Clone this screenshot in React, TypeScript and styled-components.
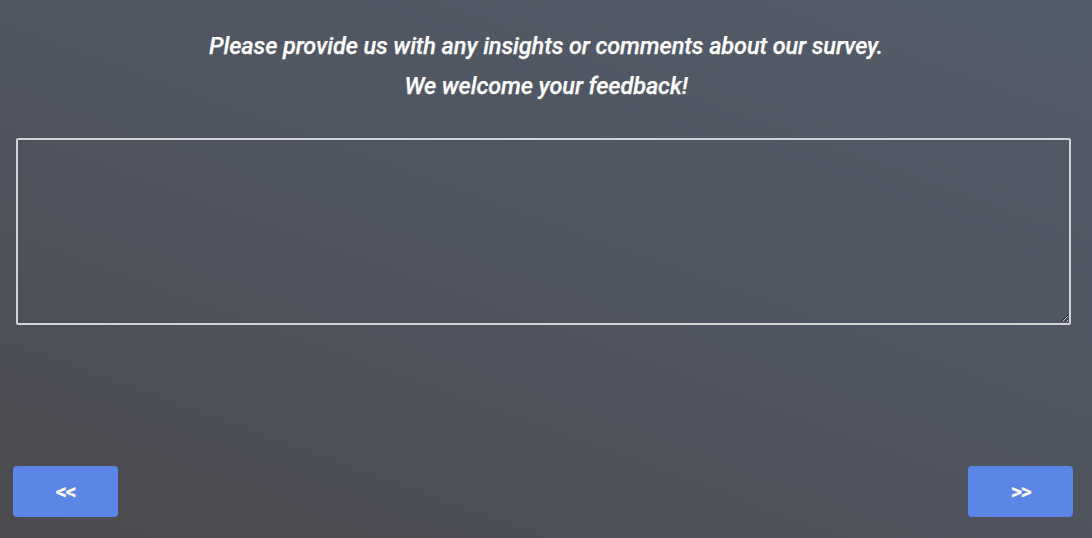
import React from "react";
import styled, { createGlobalStyle } from "styled-components";

const Global = createGlobalStyle`
  html, body { margin: 0; padding: 0; height: 100%; }
  body { background: #4e5360; }
  #root { height: 100%; }
`;

const Page = styled.div`
  box-sizing: border-box;
  height: 538px;
  display: flex;
  flex-direction: column;
  background: linear-gradient(200deg, #535c69 0%, #4f5561 45%, #4c4b4f 100%);
  font-family: Roboto, "Liberation Sans", sans-serif;
  overflow: hidden;
`;

const Prompt = styled.div`
  padding-top: 26px;
  display: flex;
  flex-direction: column;
  align-items: center;
`;

const Line = styled.p`
  margin: 0;
  color: #ffffff;
  font-style: italic;
  font-weight: 500;
  font-size: 23.5px;
  line-height: 40px;
  letter-spacing: -0.1px;
  -webkit-text-stroke: 0.25px #fff;
`;

const Feedback = styled.textarea`
  box-sizing: border-box;
  display: block;
  margin: 32px 21px 0 16px;
  height: 187px;
  border: 2px solid #d2d3d6;
  border-radius: 2px;
  background: transparent;
  color: #fff;
  font-family: Roboto, "Liberation Sans", sans-serif;
  font-size: 16px;
  padding: 8px;
  resize: vertical;
  outline: none;
`;

const Footer = styled.div`
  margin-top: auto;
  display: flex;
  justify-content: space-between;
  padding: 0 19px 21px 13px;
`;

const NavButton = styled.button`
  width: 105px;
  height: 51px;
  border: none;
  border-radius: 4px;
  background: #5b85e6;
  color: #fff;
  font-family: Roboto, "Liberation Sans", sans-serif;
  font-weight: 700;
  font-size: 22px;
  cursor: pointer;
  letter-spacing: -1.5px;
`;

export default function App() {
  return (
    <>
      <Global />
      <Page>
        <Prompt>
          <Line>Please provide us with any insights or comments about our survey.</Line>
          <Line>We welcome your feedback!</Line>
        </Prompt>
        <Feedback />
        <Footer>
          <NavButton>&lt;&lt;</NavButton>
          <NavButton>&gt;&gt;</NavButton>
        </Footer>
      </Page>
    </>
  );
}
